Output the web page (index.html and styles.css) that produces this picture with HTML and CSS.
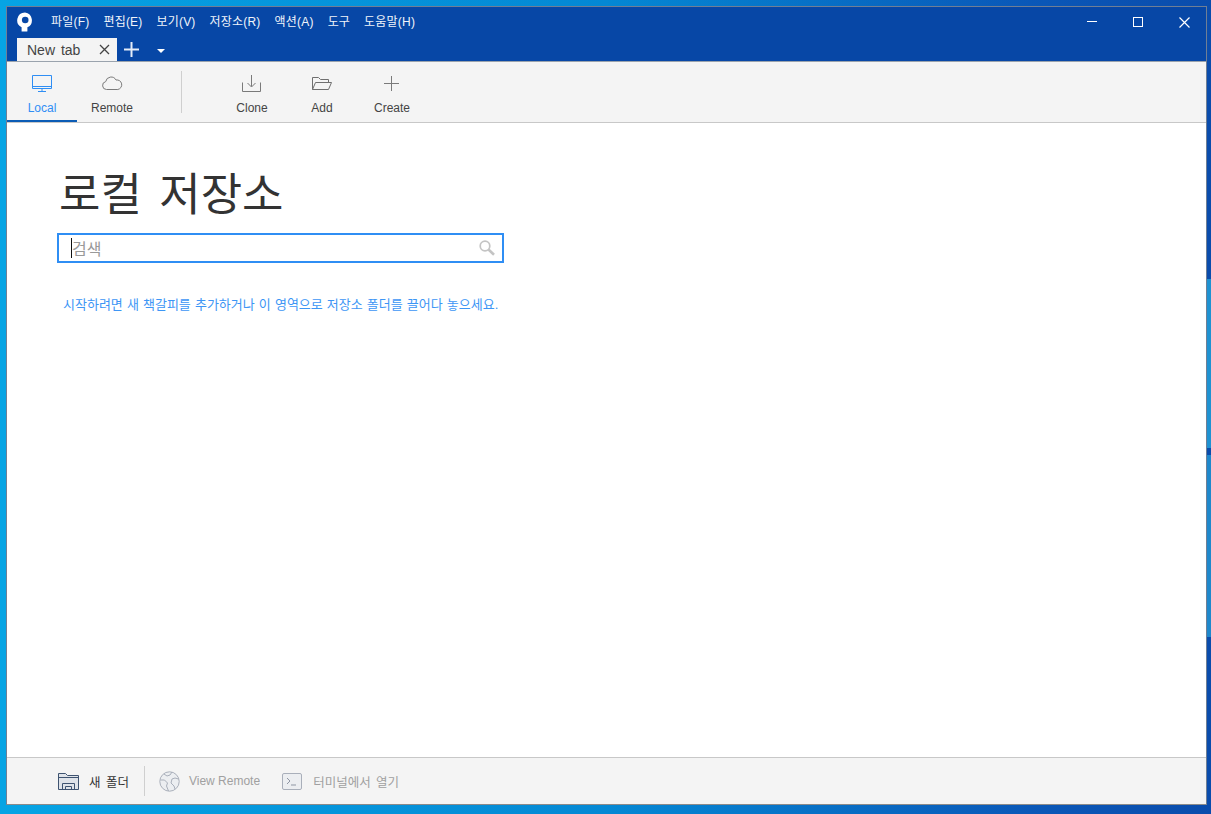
FILE: index.html
```html
<!DOCTYPE html>
<html lang="ko">
<head>
  <meta charset="UTF-8" />
  <title>Sourcetree</title>
  <link rel="stylesheet" href="styles.css">
</head>
<body>
  <div class="window">
    <header class="titlebar">
      <div class="menu-row">
        <svg class="logo" width="16" height="20" viewBox="0 0 16 20">
          <path d="M8 .5a7.8 7.8 0 0 0-3.4 14.800V19.600h5.200a.6.6 0 0 0 .6-.6v-3.700A7.800 7.800 0 0 0 8 .5z" fill="#fff"/>
          <circle cx="8.200" cy="8" r="3.300" fill="#0747a6"/>
        </svg>
        <nav class="menu">
          <span>파일(F)</span>
          <span>편집(E)</span>
          <span>보기(V)</span>
          <span>저장소(R)</span>
          <span>액션(A)</span>
          <span>도구</span>
          <span>도움말(H)</span>
        </nav>
        <div class="win-controls">
          <svg width="11" height="11" viewBox="0 0 11 11"><path d="M0 4.500h10" stroke="#fff" fill="none"/></svg>
          <svg width="11" height="11" viewBox="0 0 11 11"><rect x=".5" y=".5" width="9" height="9" stroke="#fff" fill="none"/></svg>
          <svg width="11" height="11" viewBox="0 0 11 11"><path d="M.5.500l10 10M10.500.500l-10 10" stroke="#fff" stroke-width="1.200" fill="none"/></svg>
        </div>
      </div>
      <div class="tab-row">
        <div class="tab">
          <span>New tab</span>
          <svg width="11" height="11" viewBox="0 0 11 11"><path d="M1 1l9 9M10 1l-9 9" stroke="#444" stroke-width="1.300" fill="none"/></svg>
        </div>
        <svg class="tab-add" width="15" height="15" viewBox="0 0 15 15"><path d="M7.500 0v15M0 7.500h15" stroke="#e4ecf7" stroke-width="2" fill="none"/></svg>
        <span class="tab-caret"></span>
      </div>
    </header>

    <div class="toolbar">
      <div class="tool active tool-local">
        <svg width="22" height="20" viewBox="0 0 22 20"><path d="M1.500 1.500h19v13h-19zM1.500 12.500h19M7 17.500h8M11 14.500v3" stroke="#2f8ef4" fill="none"/></svg>
        <span>Local</span>
      </div>
      <div class="tool tool-remote">
        <svg width="22" height="20" viewBox="0 0 22 20"><path d="M5.500 15.500a4 4 0 0 1-.8-7.900 5.500 5.500 0 0 1 10.300-1.600 4.800 4.800 0 0 1 1.800 9.500z" stroke="#7a7a7a" fill="none"/></svg>
        <span>Remote</span>
      </div>
      <div class="tool-sep"></div>
      <div class="tool tool-clone">
        <svg width="20" height="20" viewBox="0 0 20 20"><path d="M.5 8.500v9h18v-9M9.500 1v11.500M5.500 9l4 4 4-4" stroke="#7a7a7a" fill="none"/></svg>
        <span>Clone</span>
      </div>
      <div class="tool tool-add">
        <svg width="22" height="20" viewBox="0 0 22 20"><path d="M1.500 15.500v-12h6l2 2h8v3M1.500 15.500l3-7h16l-3 7z" stroke="#6f6f6f" fill="none"/></svg>
        <span>Add</span>
      </div>
      <div class="tool tool-create">
        <svg width="20" height="20" viewBox="0 0 20 20"><path d="M9.500 2v15M2 9.500h15" stroke="#7a7a7a" fill="none"/></svg>
        <span>Create</span>
      </div>
    </div>

    <main class="content">
      <h1>로컬 저장소</h1>
      <div class="search">
        <span class="caret"></span>
        <span class="placeholder">검색</span>
        <svg width="16" height="16" viewBox="0 0 16 16"><circle cx="6" cy="6" r="4.800" stroke="#c4c4c4" stroke-width="1.700" fill="none"/><path d="M9.500 9.500l5.500 5.200" stroke="#c4c4c4" stroke-width="2.600" fill="none"/></svg>
      </div>
      <p class="hint">시작하려면 새 책갈피를 추가하거나 이 영역으로 저장소 폴더를 끌어다 놓으세요.</p>
    </main>

    <footer class="statusbar">
      <div class="action action-folder">
        <svg width="21" height="18" viewBox="0 0 21 18"><path d="M.5 1.500h7l2 2h11v14H.5zM.5 5.500h20M4.500 17.500v-6h12v6M7.500 17.500v-3h6v3" stroke="#3e5370" fill="#dfe3e9"/></svg>
        <span class="label-ko">새 폴더</span>
      </div>
      <div class="status-sep"></div>
      <div class="action action-muted action-remote">
        <svg width="21" height="21" viewBox="0 0 21 21"><circle cx="10.500" cy="10.500" r="9.700" stroke="#a9afba" fill="#eceef1"/><path d="M5 3l3 2 3-1 2-3M1.500 9l4 0 3 3-1 3 2 5M13 8l3-1 3.500 1M13 8l-1 4 3 3 1 3" stroke="#a9afba" fill="none"/></svg>
        <span>View Remote</span>
      </div>
      <div class="action action-muted action-term">
        <svg width="20" height="17" viewBox="0 0 20 17"><rect x=".5" y=".5" width="19" height="16" rx="1.500" stroke="#a9afba" fill="#eceef1"/><path d="M5 5l3 3-3 3M9 12h5" stroke="#8f96a3" fill="none"/></svg>
        <span class="label-ko">터미널에서 열기</span>
      </div>
    </footer>
  </div>
</body>
</html>
```

FILE: styles.css
```css
:root {
  --title-blue: #0747a6;
  --bar-bg: #f4f4f4;
  --line: #c8c8c8;
  --accent: #2f8ef4;
}

html, body {
  height: 100%;
}

body {
  margin: 0;
  padding: 6px 4px 8px 6px;
  box-sizing: border-box;
  overflow: hidden;
  font-family: "Liberation Sans", "Noto Sans CJK KR", sans-serif;
  background:
    linear-gradient(to bottom, transparent 279px, #1f92d2 279px, #1f92d2 448px, transparent 448px, transparent 455px, #1f88cc 455px, #1f88cc 637px, transparent 637px) right top / 4px 100% no-repeat,
    linear-gradient(90deg, #06a4e4 0%, #0488d4 50%, #0a58b8 85%, #0a4cac 100%);
}

.window {
  height: 797px;
  display: flex;
  flex-direction: column;
  background: #fff;
  border: 1px solid #6f7f95;
  border-bottom-color: #8a8a8a;
}

.titlebar {
  background: var(--title-blue);
  height: 54px;
  flex: none;
  color: #fff;
}

.menu-row {
  height: 31px;
  box-sizing: border-box;
  padding: 0 0 4px 10px;
  display: flex;
  align-items: center;
}

.logo {
  flex: none;
  margin-top: 2px;
}

.menu {
  display: flex;
  gap: 14px;
  margin-left: 18px;
  font-size: 12px;
  letter-spacing: .2px;
  color: #f0f4fa;
}

.win-controls {
  margin-left: auto;
  margin-top: 4px;
  display: flex;
  gap: 35px;
  padding-right: 16px;
}

.tab-row {
  height: 23px;
  display: flex;
  align-items: center;
  padding-left: 10px;
}

.tab {
  width: 100px;
  height: 23px;
  box-sizing: border-box;
  background: var(--bar-bg);
  display: flex;
  align-items: center;
  justify-content: space-between;
  padding: 0 7px 0 10px;
  font-size: 14px;
  word-spacing: 2px;
  color: #444;
}

.tab-add {
  margin-left: 7px;
}

.tab-caret {
  margin-left: 18px;
  margin-top: 2px;
  border-left: 4px solid transparent;
  border-right: 4px solid transparent;
  border-top: 4px solid #fff;
}

.toolbar {
  height: 62px;
  flex: none;
  box-sizing: border-box;
  background: var(--bar-bg);
  border-top: 1px solid #9aa3ad;
  border-bottom: 1px solid var(--line);
  display: flex;
}

.tool {
  width: 70px;
  display: flex;
  flex-direction: column;
  align-items: center;
  gap: 7px;
  padding-top: 12px;
  box-sizing: border-box;
  font-size: 12px;
  color: #444;
}

.tool.active {
  color: var(--accent);
  border-bottom: 2px solid #0b5cb5;
}

.tool-sep {
  width: 1px;
  height: 42px;
  margin: 9px 35px 0 34px;
  background: #cfcfcf;
}

.content {
  flex: 1;
  padding: 47px 52px 0 50px;
}

.content h1 {
  margin: 0 0 0 2px;
  font-size: 45px;
  line-height: 52px;
  word-spacing: 5px;
  font-weight: 400;
  color: #333;
}

.search {
  width: 447px;
  height: 30px;
  margin-top: 11px;
  box-sizing: border-box;
  border: 2px solid var(--accent);
  display: flex;
  align-items: center;
  padding: 0 7px 0 12px;
  font-size: 16px;
}

.caret {
  width: 1px;
  height: 20px;
  background: #111;
}

.placeholder {
  color: #999;
}

.search svg {
  margin-left: auto;
}

.hint {
  margin: 31px 0 0 6px;
  font-size: 13px;
  word-spacing: .5px;
  color: #3d96f5;
}

.statusbar {
  height: 47px;
  flex: none;
  box-sizing: border-box;
  background: var(--bar-bg);
  border-top: 1px solid var(--line);
  display: flex;
  align-items: center;
  padding-left: 51px;
  font-size: 12px;
}

.action {
  display: flex;
  align-items: center;
  gap: 10px;
  color: #333;
}

.action-muted {
  color: #a0a0a0;
}

.action-remote {
  gap: 9px;
}

.label-ko {
  font-size: 12.5px;
  word-spacing: 2px;
}

.status-sep {
  width: 1px;
  height: 30px;
  margin: 0 14px 0 15px;
  background: #cfcfcf;
}

.action-term {
  margin-left: 22px;
  gap: 11px;
}
```
